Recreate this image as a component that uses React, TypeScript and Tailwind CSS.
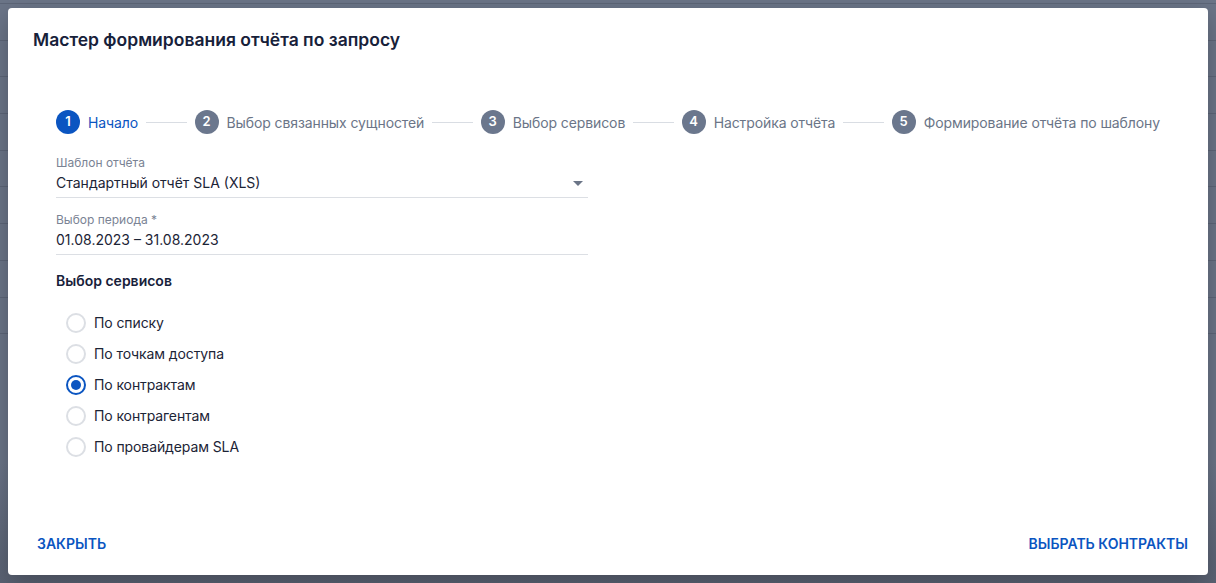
import React from 'react';

const steps = [
    { n: 1, label: 'Начало' },
    { n: 2, label: 'Выбор связанных сущностей' },
    { n: 3, label: 'Выбор сервисов' },
    { n: 4, label: 'Настройка отчёта' },
    { n: 5, label: 'Формирование отчёта по шаблону' },
];

const options = ['По списку', 'По точкам доступа', 'По контрактам', 'По контрагентам', 'По провайдерам SLA'];

const Stepper: React.FC<{ active: number }> = ({ active }) => (
    <div className="flex items-center">
        {steps.map((s, i) => (
            <React.Fragment key={s.n}>
                {i > 0 && <div className="flex-1 h-px bg-[#d9dde3] mx-2" />}
                <div className="flex items-center gap-2 shrink-0">
                    <div
                        className={
                            'w-6 h-6 rounded-full flex items-center justify-center text-[13px] font-semibold text-white ' +
                            (s.n === active ? 'bg-[#0b55c1]' : 'bg-[#6b778d]')
                        }
                    >
                        {s.n}
                    </div>
                    <span className={'text-[14px] tracking-[-0.1px] ' + (s.n === active ? 'text-[#0b55c1]' : 'text-[#6b7587]')}>
                        {s.label}
                    </span>
                </div>
            </React.Fragment>
        ))}
    </div>
);

const Field: React.FC<{ label: string; value: string; select?: boolean }> = ({ label, value, select }) => (
    <div className="w-[532px] border-b border-[#dcdfe4] pb-1">
        <div className="text-[12px] leading-4 text-[#7a8394]">{label}</div>
        <div className="flex items-center justify-between mt-[2px]">
            <span className="text-[14px] leading-5 text-[#1c2436]">{value}</span>
            {select && (
                <svg width="10" height="5" viewBox="0 0 10 5" className="mr-[5px]">
                    <path d="M0 0h10L5 5z" fill="#6b7587" />
                </svg>
            )}
        </div>
    </div>
);

const Radio: React.FC<{ label: string; checked?: boolean }> = ({ label, checked }) => (
    <label className="flex items-center h-[31px] pl-[10px]">
        <span
            className={
                'w-5 h-5 rounded-full border-2 flex items-center justify-center ' +
                (checked ? 'border-[#0b55c1]' : 'border-[#dcdfe4]')
            }
        >
            {checked && <span className="w-[10px] h-[10px] rounded-full bg-[#0b55c1]" />}
        </span>
        <span className="ml-2 text-[14px] tracking-[-0.1px] text-[#1c2436]">{label}</span>
    </label>
);

export default function App() {
    return (
        <div
            className="relative w-full h-[583px] overflow-hidden bg-[#6b7588] p-2"
            style={{ fontFamily: 'Inter, "Noto Sans", sans-serif' }}
        >
            {/* table behind the backdrop */}
            <div className="absolute inset-0 flex flex-col pt-[3px]">
                {Array.from({ length: 10 }).map((_, i) => (
                    <div key={i} className="h-[36.7px] border-t border-[#5d6678] shrink-0" />
                ))}
            </div>
            <div className="absolute inset-x-0 bottom-0 h-[120px] bg-gradient-to-b from-transparent to-[#5a6273]" />

            <div className="relative h-full bg-white rounded-[4px] flex flex-col shadow-[0_8px_24px_rgba(0,0,0,0.25)]">
                <h2 className="pt-[18px] px-[25px] text-[17.5px] leading-7 font-semibold text-[#17213a]">
                    Мастер формирования отчёта по запросу
                </h2>

                <div className="px-12 pt-[56px]">
                    <Stepper active={1} />

                    <div className="mt-[21px] flex flex-col gap-[14px]">
                        <Field label="Шаблон отчёта" value="Стандартный отчёт SLA (XLS)" select />
                        <Field label="Выбор периода *" value="01.08.2023 – 31.08.2023" />
                    </div>

                    <div className="mt-4 text-[14px] leading-5 font-semibold text-[#17213a]">Выбор сервисов</div>

                    <div className="mt-[16px] flex flex-col">
                        {options.map((o) => (
                            <Radio key={o} label={o} checked={o === 'По контрактам'} />
                        ))}
                    </div>
                </div>

                <div className="mt-auto flex items-center justify-between pl-[21px] pr-[12px] pb-[15px]">
                    <button className="px-2 py-[6px] text-[14px] font-semibold uppercase text-[#0b55c1]">Закрыть</button>
                    <button className="px-2 py-[6px] text-[14px] font-semibold uppercase text-[#0b55c1]">Выбрать контракты</button>
                </div>
            </div>
        </div>
    );
}
